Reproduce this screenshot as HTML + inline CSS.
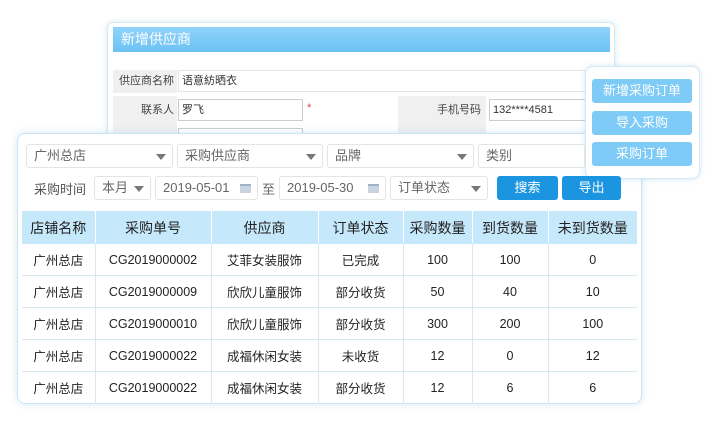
<!DOCTYPE html>
<html><head><meta charset="utf-8"><style>
*{box-sizing:border-box;margin:0;padding:0}
body{width:706px;height:422px;background:#fff;position:relative;overflow:hidden;font-family:"Liberation Sans","Noto Sans CJK SC",sans-serif;color:#333}
.a{position:absolute}
.back{left:107px;top:22px;width:508px;height:130px;background:#fff;border:1px solid #d6eaf6;border-radius:6px;box-shadow:0 0 6px rgba(120,180,220,.3)}
.hdr{left:113px;top:27px;width:497px;height:25px;background:linear-gradient(#8fd3fb,#6cc2f3);color:#fff;font-size:14px;line-height:25px;padding-left:8px}
.lbl{background:#f0f0f0;font-size:11px;text-align:right;color:#444}
.inp{background:#fff;border:1px solid #ccc;font-size:11px;padding-left:3px;line-height:20px}
.pop{left:585px;top:66px;width:115px;height:113px;background:#fff;border:1px solid #d4e8f5;border-radius:8px;box-shadow:0 0 6px rgba(120,180,220,.35)}
.pb{left:592px;width:100px;height:24px;background:#7dcbf6;color:#fff;font-size:13px;text-align:center;line-height:24px;border-radius:3px}
.card{left:17px;top:133px;width:625px;height:271px;background:#fff;border:1px solid #c9e4f4;border-radius:8px;box-shadow:0 0 8px rgba(120,180,220,.3)}
.sel{height:24px;border:1px solid #e4e4e4;border-radius:3px;font-size:13px;color:#666;line-height:22px;padding-left:7px;background:#fff}
.sel .tri{position:absolute;right:6px;top:9px;width:0;height:0;border-left:5px solid transparent;border-right:5px solid transparent;border-top:6px solid #777}
.cal{position:absolute;right:6px;top:7px;width:11px;height:9px;background:#c8d4e0;border-top:2px solid #9fb2c6}
.btn{top:176px;height:24px;background:#1b95e0;color:#fff;font-size:13px;text-align:center;line-height:24px;border-radius:3px}
table{position:absolute;left:22px;top:211px;border-collapse:collapse;font-size:12.5px;color:#222}
td,th{border:1px solid #d9e7f1;text-align:center;height:32px;padding:0}
th{background:#c5e8fb;font-weight:normal;font-size:14px;color:#222;height:32px;border-color:#c5e8fb #fff}
tr:last-child td{border-bottom:none}
td:first-child,th:first-child{border-left:none}
td:last-child,th:last-child{border-right:none}
</style></head><body>
<div class="a back"></div>
<div class="a hdr">新增供应商</div>
<div class="a lbl" style="left:113px;top:70px;width:64px;height:23px;line-height:23px;padding-right:3px">供应商名称</div>
<div class="a inp" style="left:178px;top:70px;width:422px;height:22px;border-color:#e5e5e5">语意紡晒衣</div>
<div class="a lbl" style="left:113px;top:96px;width:64px;height:40px;line-height:28px;padding-right:3px">联系人</div>
<div class="a inp" style="left:178px;top:99px;width:125px;height:22px">罗飞</div>
<div class="a" style="left:307px;top:102px;color:#e04040;font-size:11px">*</div>
<div class="a lbl" style="left:398px;top:96px;width:88px;height:40px;line-height:28px;padding-right:5px">手机号码</div>
<div class="a inp" style="left:489px;top:99px;width:100px;height:22px">132****4581</div>
<div class="a inp" style="left:178px;top:128px;width:125px;height:10px"></div>
<div class="a card"></div>
<div class="a pop"></div>
<div class="a pb" style="top:79px">新增采购订单</div>
<div class="a pb" style="top:111px">导入采购</div>
<div class="a pb" style="top:142px">采购订单</div>
<div class="a sel" style="left:26px;top:144px;width:147px">广州总店<span class="tri"></span></div>
<div class="a sel" style="left:177px;top:144px;width:146px">采购供应商<span class="tri"></span></div>
<div class="a sel" style="left:327px;top:144px;width:147px">品牌<span class="tri"></span></div>
<div class="a sel" style="left:478px;top:144px;width:107px">类别</div>
<div class="a" style="left:34px;top:179px;font-size:13px;color:#555">采购时间</div>
<div class="a sel" style="left:94px;top:176px;width:57px">本月<span class="tri"></span></div>
<div class="a sel" style="left:155px;top:176px;width:103px">2019-05-01<span class="cal"></span></div>
<div class="a" style="left:262px;top:179px;font-size:13px;color:#666">至</div>
<div class="a sel" style="left:279px;top:176px;width:107px">2019-05-30<span class="cal"></span></div>
<div class="a sel" style="left:390px;top:176px;width:98px">订单状态<span class="tri"></span></div>
<div class="a btn" style="left:497px;width:61px">搜索</div>
<div class="a btn" style="left:562px;width:59px">导出</div>
<table>
<tr><th style="width:73px">店铺名称</th><th style="width:116px">采购单号</th><th style="width:107px">供应商</th><th style="width:85px">订单状态</th><th style="width:69px">采购数量</th><th style="width:76px">到货数量</th><th style="width:89px">未到货数量</th></tr>
<tr><td>广州总店</td><td>CG2019000002</td><td>艾菲女装服饰</td><td>已完成</td><td>100</td><td>100</td><td>0</td></tr>
<tr><td>广州总店</td><td>CG2019000009</td><td>欣欣儿童服饰</td><td>部分收货</td><td>50</td><td>40</td><td>10</td></tr>
<tr><td>广州总店</td><td>CG2019000010</td><td>欣欣儿童服饰</td><td>部分收货</td><td>300</td><td>200</td><td>100</td></tr>
<tr><td>广州总店</td><td>CG2019000022</td><td>成福休闲女装</td><td>未收货</td><td>12</td><td>0</td><td>12</td></tr>
<tr><td>广州总店</td><td>CG2019000022</td><td>成福休闲女装</td><td>部分收货</td><td>12</td><td>6</td><td>6</td></tr>
</table>
</body></html>
